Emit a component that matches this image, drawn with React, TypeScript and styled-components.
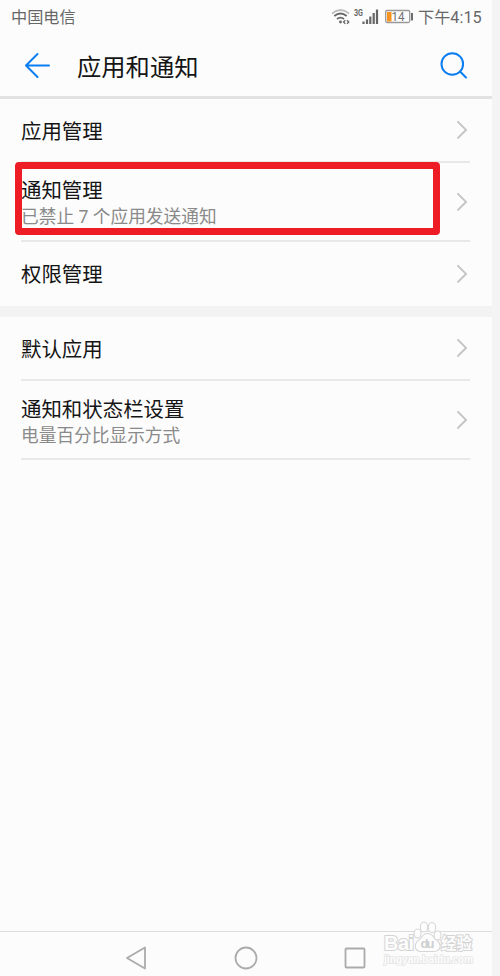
import React from "react";
import styled, { createGlobalStyle } from "styled-components";

const GlobalStyle = createGlobalStyle`
  * { box-sizing: border-box; }
  body { margin: 0; background: #f4f4f4; }
`;

const Screen = styled.div`
  width: 492px;
  height: 976px;
  display: flex;
  flex-direction: column;
  background: #fcfcfc;
  font-family: Roboto, "Noto Sans CJK SC", sans-serif;
  color: #151515;
  overflow: hidden;
`;

const StatusBar = styled.header`
  height: 34px;
  flex: none;
  display: flex;
  align-items: center;
  padding: 0 10px 0 11px;
  color: #686868;
  font-size: 16.2px;
  line-height: 34px;
  white-space: nowrap;
`;

const Carrier = styled.span`
  flex: 1;
  padding-top: 2px;
`;

const StatusIcons = styled.svg`
  width: 84px;
  height: 34px;
  flex: none;
  margin-right: 3px;
`;

const Clock = styled.span`
  width: 64px;
  padding-top: 2px;
  font-size: 16.2px;
`;

const TitleBar = styled.div`
  height: 65px;
  flex: none;
  display: flex;
  align-items: center;
  padding: 0 24px;
  border-bottom: 3px solid #e2e2e2;
`;

const TitleIcon = styled.svg`
  width: 28px;
  height: 30px;
  flex: none;
  fill: none;
  stroke: #0a7df0;
  stroke-width: 2;
  stroke-linecap: round;
  stroke-linejoin: round;
`;

const Title = styled.h1`
  flex: 1;
  margin: 5px 0 0 25px;
  font-size: 24.3px;
  font-weight: 400;
  line-height: 30px;
`;

const Group = styled.section<{ $gap?: boolean }>`
  flex: none;
  padding: 0 22px 0 21px;
  border-bottom: ${(p) => (p.$gap ? "11px solid #f3f3f3" : "0")};
`;

const Row = styled.div<{ $height: number; $line?: boolean }>`
  position: relative;
  height: ${(p) => p.$height}px;
  display: flex;
  align-items: center;
  justify-content: space-between;
  border-bottom: ${(p) => (p.$line ? "2px solid #e8e8e8" : "0")};
`;

const Texts = styled.div<{ $top: number }>`
  padding-top: ${(p) => p.$top}px;
`;

const Label = styled.div`
  font-size: 20.45px;
  line-height: 28px;
`;

const Note = styled.div`
  color: #8a8a8a;
  font-size: 17.7px;
  line-height: 24px;
`;

const Chevron = styled.svg`
  width: 14px;
  height: 20px;
  margin-right: 1px;
  fill: none;
  stroke: #c4c4c4;
  stroke-width: 2;
  stroke-linecap: round;
`;

const Highlight = styled.div`
  position: absolute;
  left: -6px;
  top: -1px;
  width: 425px;
  height: 73px;
  border: 7px solid #ee1c25;
  border-radius: 4px;
`;

const NavBar = styled.nav`
  position: relative;
  height: 45px;
  flex: none;
  margin-top: auto;
  border-top: 1px solid #dddddd;
  display: flex;
  align-items: center;
  justify-content: space-between;
  padding: 8px 125px 0 125px;
`;

const NavIcon = styled.svg`
  width: 24px;
  height: 24px;
  fill: none;
  stroke: #ababab;
  stroke-width: 1.8;
  stroke-linejoin: round;
`;

const Watermark = styled.svg`
  position: absolute;
  left: 380px;
  top: -13px;
  width: 100px;
  height: 52px;
  fill: #fdfdfd;
  stroke: #d4d4d4;
  stroke-width: 2;
  paint-order: stroke;
  font-family: "Liberation Sans", "Noto Sans CJK SC", sans-serif;
`;

type Item = {
  label: string;
  note?: string;
  height: number;
  top: number;
  line?: boolean;
  marked?: boolean;
};

const groups: Item[][] = [
  [
    { label: "应用管理", height: 64, top: 3, line: true },
    { label: "通知管理", note: "已禁止 7 个应用发送通知", height: 79, top: 2, line: true, marked: true },
    { label: "权限管理", height: 64, top: 1 },
  ],
  [
    { label: "默认应用", height: 64, top: 3, line: true },
    { label: "通知和状态栏设置", note: "电量百分比显示方式", height: 79, top: 4, line: true },
  ],
];

export default function App() {
  return (
    <Screen>
      <GlobalStyle />
      <StatusBar>
        <Carrier>中国电信</Carrier>
        <StatusIcons viewBox="331 0 84 34" fill="none" stroke="#666">
          <path d="M332 13.500Q340.500 6.500 349 13.500" stroke="#bdbdbd" strokeWidth="1.7" />
          <path d="M334.300 16Q340.500 11 346.700 16M337 19Q340.500 16.200 344 19" strokeWidth="1.8" />
          <circle cx="340.500" cy="22" r="1.400" fill="#666" stroke="none" />
          <path d="M345.300 20.200L343.500 22L345.300 23.800M347 20.200L348.800 22L347 23.800" strokeWidth="1.3" />
          <text x="354" y="16" fontSize="9.500" fontWeight="700" textLength="9" lengthAdjust="spacingAndGlyphs" fill="#666" stroke="none">3G</text>
          <path d="M363.500 24V21.500M367 24V19.500M370.300 24V16.500M373.700 24V13M377 24V9.500" strokeWidth="2.2" />
          <rect x="385.700" y="10.500" width="24" height="12" rx="1.500" stroke="#999" strokeWidth="1.3" />
          <rect x="387" y="12" width="4.500" height="9.500" fill="#f7931e" stroke="none" />
          <text x="391.500" y="20.800" fontSize="12.500" textLength="13" lengthAdjust="spacingAndGlyphs" fill="#707070" stroke="none">14</text>
          <path d="M412 13V20.500" strokeWidth="1.900" />
        </StatusIcons>
        <Clock>下午4:15</Clock>
      </StatusBar>
      <TitleBar>
        <TitleIcon viewBox="0 0 28 30">
          <path d="M25 15.500H2M13.500 4L2 15.500L13.500 27" />
        </TitleIcon>
        <Title>应用和通知</Title>
        <TitleIcon viewBox="0 0 28 30">
          <circle cx="12.300" cy="14" r="10.800" />
          <path d="M20 21.500L26 27.500" />
        </TitleIcon>
      </TitleBar>
      {groups.map((items, index) => (
        <Group key={index} $gap={index === 0}>
          {items.map((item) => (
            <Row key={item.label} $height={item.height} $line={item.line}>
              <Texts $top={item.top}>
                <Label>{item.label}</Label>
                {item.note && <Note>{item.note}</Note>}
              </Texts>
              <Chevron viewBox="0 0 14 20">
                <path d="M3 1.900L11 9.900L3 17.900" />
              </Chevron>
              {item.marked && <Highlight />}
            </Row>
          ))}
        </Group>
      ))}
      <NavBar>
        <NavIcon viewBox="0 0 24 24">
          <path d="M20 1.500V22.500L2 12Z" />
        </NavIcon>
        <NavIcon viewBox="0 0 24 24">
          <circle cx="12" cy="12" r="10.500" />
        </NavIcon>
        <NavIcon viewBox="0 0 24 24">
          <rect x="2.500" y="2.500" width="19" height="19" rx="1" />
        </NavIcon>
        <Watermark viewBox="380 919 100 52">
          <text x="384" y="950" fontSize="20" fontWeight="700" textLength="30">Bai</text>
          <path d="M427.500 934C423 934 422.500 938 419.500 940C413 945 416 951 421 951H434C440 951 442 945 436 940C433 938 432 934 427.500 934Z" />
          <ellipse cx="417.500" cy="933.500" rx="3" ry="4" />
          <ellipse cx="424" cy="927" rx="3.200" ry="4.500" />
          <ellipse cx="432" cy="927.500" rx="3.200" ry="4.500" />
          <ellipse cx="437.500" cy="935.500" rx="3" ry="4" />
          <text x="420.500" y="948" fontSize="13" fontWeight="700" textLength="14" fill="#cfcfcf" stroke="none">du</text>
          <text x="441" y="949" fontSize="15.500" fontWeight="700" textLength="31">经验</text>
          <text x="384" y="962.500" fontSize="11" fontWeight="700" textLength="89" lengthAdjust="spacingAndGlyphs" stroke="#e4e4e4" strokeWidth="1.6">jingyan.baidu.com</text>
        </Watermark>
      </NavBar>
    </Screen>
  );
}
